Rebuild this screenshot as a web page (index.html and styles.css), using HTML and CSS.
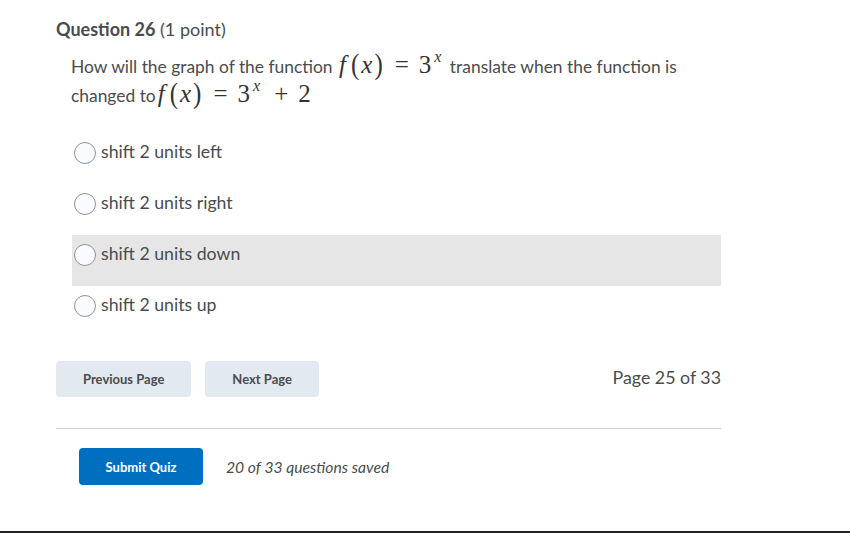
FILE: index.html
```html
<!DOCTYPE html>
<html>
<head>
<meta charset="utf-8">
<link rel="stylesheet" href="styles.css">
</head>
<body>
<div class="page">
  <h2 class="q-title"><strong>Question 26</strong> (1 point)</h2>
  <div class="q-body">
    <p class="q-text">How will the graph of the function <span class="m"><i class="fn">f</i><span class="par">(</span><i>x</i><span class="par">)</span><span class="op">=</span>3<sup><i>x</i></sup></span> translate when the function is changed to<span class="m"><i class="fn">f</i><span class="par">(</span><i>x</i><span class="par">)</span><span class="op">=</span>3<sup><i>x</i></sup><span class="op">+</span>2</span></p>
    <div class="options">
      <label class="opt"><span class="radio"></span><span class="opt-text">shift 2 units left</span></label>
      <label class="opt"><span class="radio"></span><span class="opt-text">shift 2 units right</span></label>
      <label class="opt hover"><span class="radio"></span><span class="opt-text">shift 2 units down</span></label>
      <label class="opt"><span class="radio"></span><span class="opt-text">shift 2 units up</span></label>
    </div>
  </div>
  <div class="nav">
    <div class="nav-btns">
      <button class="btn">Previous Page</button>
      <button class="btn">Next Page</button>
    </div>
    <div class="page-count">Page 25 of 33</div>
  </div>
  <hr class="sep">
  <div class="submit-row">
    <button class="btn-primary">Submit Quiz</button>
    <span class="saved">20 of 33 questions saved</span>
  </div>
</div>
<div class="bottom-line"></div>
</body>
</html>
```

FILE: styles.css
```css
html, body {
  margin: 0;
  padding: 0;
  background: #fff;
}
body {
  font-family: Lato, "Open Sans", sans-serif;
  color: #494c4e;
  width: 850px;
  height: 533px;
  position: relative;
  overflow: hidden;
}
.page {
  padding: 17px 0 0 56px;
  width: 665px;
}
.q-title {
  margin: 0;
  font-size: 18px;
  font-weight: 400;
  line-height: 24px;
}
.q-title strong {
  font-weight: 700;
}
.q-body {
  padding-left: 15px;
}
.q-text {
  margin: 11px 0 0 0;
  font-size: 17.4px;
  line-height: 28px;
  width: 650px;
}
.m {
  font-family: "Liberation Serif", "DejaVu Serif", serif;
  font-size: 25px;
  line-height: 1;
  color: #333;
  white-space: nowrap;
}
.m i {
  font-style: italic;
}
.m .fn {
  margin-right: 3px;
  margin-left: 2px;
}
.m .par {
  display: inline-block;
  transform: scaleY(1.15);
  margin: 0 2px;
}
.m .op {
  margin: 0 10px;
}
.m sup {
  font-size: 16px;
  line-height: 0;
  vertical-align: 11px;
  margin-left: 3px;
  margin-right: 4px;
}
.options {
  margin-top: 23px;
  margin-left: 1px;
  display: flex;
  flex-direction: column;
}
.opt {
  display: flex;
  align-items: flex-start;
  height: 51px;
  box-sizing: border-box;
  padding: 9px 0 0 2px;
  font-size: 17.7px;
}
.opt.hover {
  background: #e6e6e6;
}
.radio {
  width: 20px;
  height: 20px;
  border: 1px solid #8e9497;
  border-radius: 50%;
  background: #f9fbff;
  flex: none;
}
.opt-text {
  margin-left: 5px;
  line-height: 20px;
}
.nav {
  margin-top: 24px;
  display: flex;
  justify-content: space-between;
  align-items: flex-start;
}
.nav-btns {
  display: flex;
  gap: 14px;
}
.btn {
  font-family: Lato, sans-serif;
  font-weight: 700;
  font-size: 13px;
  color: #494c4e;
  background: #e3e9f1;
  border: none;
  border-radius: 4px;
  height: 36px;
  padding: 0 27px;
}
.page-count {
  font-size: 17.8px;
  line-height: 32px;
}
.sep {
  margin: 31px 0 0 0;
  border: none;
  border-top: 1px solid #d3d3d3;
  height: 0;
}
.submit-row {
  margin-top: 19px;
  padding-left: 23px;
  display: flex;
  align-items: center;
  gap: 23px;
}
.btn-primary {
  font-family: Lato, sans-serif;
  font-weight: 700;
  font-size: 13px;
  color: #fff;
  background: #006fbf;
  border: none;
  border-radius: 4px;
  height: 37px;
  width: 124px;
}
.saved {
  font-style: italic;
  font-size: 15.7px;
}
.bottom-line {
  position: absolute;
  left: 0;
  right: 0;
  bottom: 0;
  height: 2px;
  background: #222;
}
```
